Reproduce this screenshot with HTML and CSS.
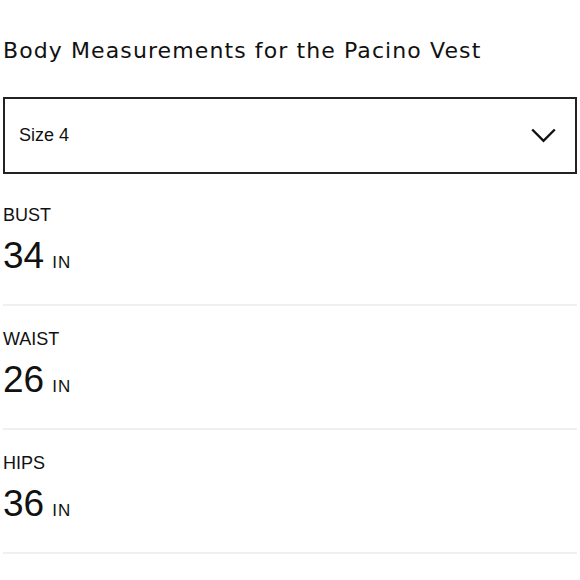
FILE: index.html
```html
<!DOCTYPE html>
<html>
<head>
<meta charset="utf-8">
<link rel="stylesheet" href="styles.css">
</head>
<body>
<div class="page">
  <h1 class="title">Body Measurements for the Pacino Vest</h1>
  <div class="select">
    <span class="select-label">Size 4</span>
    <svg class="chevron" width="25" height="15" viewBox="0 0 25 15"><path d="M1.2 1.5 L12.5 12.8 L23.8 1.5" fill="none" stroke="#111" stroke-width="2.4"/></svg>
  </div>
  <div class="rows">
    <div class="row">
      <div class="label">BUST</div>
      <div class="value"><span class="num">34</span><span class="unit">IN</span></div>
    </div>
    <div class="row">
      <div class="label">WAIST</div>
      <div class="value"><span class="num">26</span><span class="unit">IN</span></div>
    </div>
    <div class="row">
      <div class="label">HIPS</div>
      <div class="value"><span class="num">36</span><span class="unit">IN</span></div>
    </div>
  </div>
</div>
</body>
</html>
```
FILE: styles.css
```css
html, body {
  margin: 0;
  padding: 0;
  background: #fff;
}
.page {
  padding: 0 3px;
  font-family: "Liberation Sans", Arial, sans-serif;
  color: #111;
}
.title {
  margin: 0;
  padding-top: 36px;
  font-family: "DejaVu Sans", "Liberation Sans", sans-serif;
  font-weight: 400;
  font-size: 22px;
  line-height: 30px;
  letter-spacing: 1.1px;
}
.select {
  margin-top: 31px;
  height: 73px;
  border: 2px solid #222;
  display: flex;
  align-items: center;
  justify-content: space-between;
  padding: 0 19px 0 14px;
}
.select-label {
  font-size: 18px;
}
.chevron {
  display: block;
}
.rows {
  padding-top: 8px;
}
.row {
  border-bottom: 2px solid #f0f0f0;
  padding: 22px 0 27px;
}
.label {
  font-size: 18px;
  line-height: 22px;
}
.value {
  margin-top: 8px;
  height: 43px;
  display: flex;
  align-items: baseline;
}
.num {
  font-size: 37px;
  line-height: 43px;
}
.unit {
  font-size: 17px;
  letter-spacing: 1px;
  margin-left: 8px;
}
```
